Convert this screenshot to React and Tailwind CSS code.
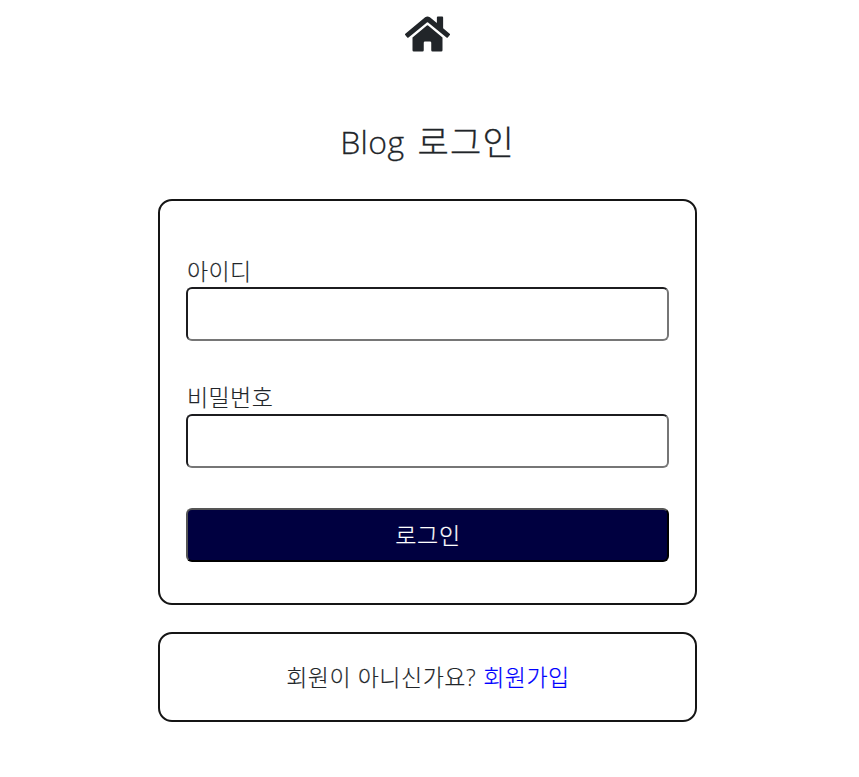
import { FaHome } from "react-icons/fa";

const font = "font-['Open_Sans','Noto_Sans_CJK_KR',sans-serif]";

function Field({ id, label, type, labelClass }) {
  return (
    <>
      <label htmlFor={id} className={`block pl-px text-[23px] tracking-[0.4px] [-webkit-text-stroke:0.15px_#212529] ${labelClass}`}>{label}</label>
      <input id={id} type={type} className="block h-[54px] w-full rounded-[6px] border-2 border-t-[#1c1c1f] border-l-[#1c1c1f] border-r-[#767676] border-b-[#767676] bg-white px-3 outline-none" />
    </>
  );
}

export default function App() {
  return (
    <main className={`flex min-h-screen flex-col items-center bg-white pr-1 font-light text-[#212529] ${font}`}>
      <FaHome className="mt-[14px] h-[40px] w-[45px]" />
      <h1 className="mt-[64px] flex h-[48px] gap-[13px] leading-[48px] whitespace-nowrap [-webkit-text-stroke:0.3px_#212529]">
        <span className="text-[32px] tracking-[0.4px]">Blog</span>
        <span className="text-[34px] tracking-[1.2px]">로그인</span>
      </h1>
      <form className="mt-[33px] h-[406px] w-[539px] rounded-[14px] border-2 border-[#151515] px-[26px] pt-[53px]">
        <Field id="username" label="아이디" type="text" labelClass="h-[33px] leading-[35px]" />
        <Field id="password" label="비밀번호" type="password" labelClass="mt-[39px] h-[34px] leading-[35px]" />
        <button type="button" className="mt-[40px] block h-[54px] w-full rounded-[6px] border-2 border-t-[#555] border-l-[#555] border-r-black border-b-black bg-[#000040] pl-px text-[23px] tracking-[0.6px] text-white [-webkit-text-stroke:0.2px_white]">로그인</button>
      </form>
      <p className="mt-[27px] flex h-[90px] w-[539px] items-center justify-center gap-[7px] rounded-[14px] border-2 border-[#151515] pl-px text-[23px] tracking-[0.5px] whitespace-nowrap [-webkit-text-stroke:0.15px_currentColor]">
        <span>회원이 아니신가요?</span>
        <a href="#join" className="text-[#0000ff] [-webkit-text-stroke:0.2px_#0000ff]">회원가입</a>
      </p>
    </main>
  );
}
